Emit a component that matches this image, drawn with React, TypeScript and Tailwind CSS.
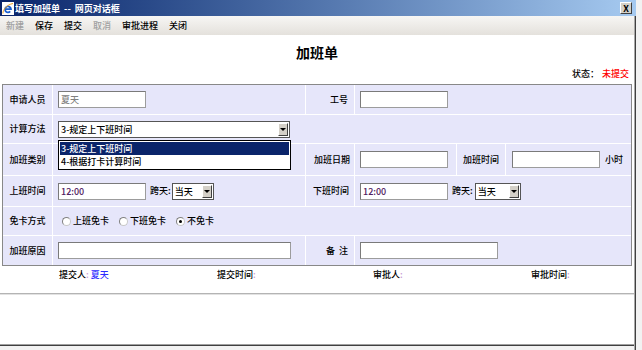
import React from "react";

function Arrow() {
  return (
    <div className="w-[10px] h-[13px] bg-[#d4d0c8] border border-t-white border-l-white border-r-[#404040] border-b-[#404040] flex items-center justify-center">
      <div className="w-0 h-0 border-l-[3px] border-r-[3px] border-t-[3px] border-l-transparent border-r-transparent border-t-black" />
    </div>
  );
}

function Input({ className = "", children }: { className?: string; children?: React.ReactNode }) {
  return (
    <div
      className={
        "h-[17px] bg-white border border-[#9c9c9c] border-t-[#7a7a7a] border-l-[#7a7a7a] flex items-center pl-[2px] text-[9px] leading-none shrink-0 " +
        className
      }
    >
      {children}
    </div>
  );
}

function Select({ className = "", children }: { className?: string; children?: React.ReactNode }) {
  return (
    <div
      className={
        "h-[17px] bg-white border border-[#555] flex items-center justify-between pl-[2px] pr-[1px] text-[9px] leading-none shrink-0 " +
        className
      }
    >
      <span>{children}</span>
      <Arrow />
    </div>
  );
}

function Radio({ checked, label }: { checked?: boolean; label: string }) {
  return (
    <div className="flex items-center">
      <span className="w-[9px] h-[9px] rounded-full border border-[#808080] border-b-[#c8c8c8] border-r-[#c8c8c8] bg-white flex items-center justify-center">
        {checked && <span className="w-[3px] h-[3px] rounded-full bg-black" />}
      </span>
      <span className="ml-[2px]">{label}</span>
    </div>
  );
}

const cell = "bg-[#e6e6fa] flex items-center";

export default function App() {
  return (
    <div className="w-[642px] h-[350px] overflow-hidden bg-[#f2f2f2] flex font-['Noto_Sans_CJK_SC',sans-serif] text-[9px] font-medium text-black">
      <div className="w-[636px] h-full flex flex-col">
        {/* title bar */}
        <div className="h-[16px] bg-linear-to-r from-[#0a246a] to-[#a6caf0] flex items-center shrink-0">
          <svg width="12" height="13" viewBox="0 0 12 13" className="ml-[2px]">
            <rect width="12" height="13" fill="#fff" />
            <path d="M3.2 7.2 H9 A3 3 0 1 0 8.2 9.4" stroke="#1a5fd0" strokeWidth="1.8" fill="none" />
            <path d="M1 11.5 C0.5 8 5 2.5 11 1.5" stroke="#f0a020" strokeWidth="1" fill="none" />
          </svg>
          <span className="ml-[1px] text-white font-bold leading-none whitespace-pre">填写加班单  --  网页对话框</span>
          <div className="flex-1" />
          <div className="w-[12px] h-[12px] mr-[4px] bg-[#d4d0c8] border border-t-white border-l-white border-r-[#404040] border-b-[#404040] flex items-center justify-center text-[9px] font-bold leading-none text-black">
            X
          </div>
        </div>
        <div className="flex flex-1">
          <div className="flex-1 flex flex-col">
            {/* toolbar */}
            <div className="h-[19px] bg-linear-to-b from-[#f7f6f4] to-[#e4e1dc] flex items-center pl-[6px] gap-[11px] leading-none shrink-0">
              <span className="text-[#a0a0a0]">新建</span>
              <span>保存</span>
              <span>提交</span>
              <span className="text-[#a0a0a0]">取消</span>
              <span>审批进程</span>
              <span>关闭</span>
            </div>
            {/* body */}
            <div className="h-[309px] bg-white flex flex-col shrink-0">
              <div className="pt-[10px] h-[24px] text-center text-[14px] leading-[14px] font-bold text-black">加班单</div>
              <div className="mt-[9px] h-[12px] leading-[12px] flex justify-end pr-[5px]">
                <span>状态：</span>
                <span className="ml-[3px] text-[#ff0000]">未提交</span>
              </div>
              <div className="mt-[4px] ml-[2px] w-[630px] h-[182px] border border-[#888] bg-white grid grid-cols-[49px_252px_48px_101px_48px_125px] grid-rows-[29px_28px_31px_30px_28px_29px] gap-px">
                {/* row 1 */}
                <div className={cell + " justify-center"}>申请人员</div>
                <div className={cell + " pl-[5px]"}>
                  <Input className="w-[88px] text-[#808080]">夏天</Input>
                </div>
                <div className={cell + " justify-end pr-[6px]"}>工号</div>
                <div className={cell + " col-span-3 pl-[5px]"}>
                  <Input className="w-[88px]" />
                </div>
                {/* row 2 */}
                <div className={cell + " justify-center"}>计算方法</div>
                <div className={cell + " col-span-5 pl-[5px]"}>
                  <div className="relative">
                    <Select className="w-[232px]">3-规定上下班时间</Select>
                    <div className="absolute z-10 left-0 top-[19px] w-[233px] h-[30px] border border-black bg-white p-[1px] leading-[13px]">
                      <div className="h-[13px] bg-[#0a246a] text-white pl-[1px]">3-规定上下班时间</div>
                      <div className="h-[13px] pl-[1px]">4-根据打卡计算时间</div>
                    </div>
                  </div>
                </div>
                {/* row 3 */}
                <div className={cell + " justify-center"}>加班类别</div>
                <div className={cell + " pl-[5px]"}>
                  <Select className="w-[232px]"> </Select>
                </div>
                <div className={cell + " justify-end pr-[4px]"}>加班日期</div>
                <div className={cell + " pl-[5px]"}>
                  <Input className="w-[88px]" />
                </div>
                <div className={cell + " justify-center"}>加班时间</div>
                <div className={cell + " pl-[6px]"}>
                  <Input className="w-[88px]" />
                  <span className="ml-[5px]">小时</span>
                </div>
                {/* row 4 */}
                <div className={cell + " justify-center"}>上班时间</div>
                <div className={cell + " pl-[5px]"}>
                  <Input className="w-[88px] text-[#502060]">12:00</Input>
                  <span className="ml-[4px]">跨天:</span>
                  <Select className="ml-[1px] w-[42px]">当天</Select>
                </div>
                <div className={cell + " justify-end pr-[5px]"}>下班时间</div>
                <div className={cell + " col-span-3 pl-[5px]"}>
                  <Input className="w-[88px] text-[#502060]">12:00</Input>
                  <span className="ml-[4px]">跨天:</span>
                  <Select className="ml-[2px] w-[46px]">当天</Select>
                </div>
                {/* row 5 */}
                <div className={cell + " justify-center"}>免卡方式</div>
                <div className={cell + " col-span-5 pl-[9px] gap-[10px]"}>
                  <Radio label="上班免卡" />
                  <Radio label="下班免卡" />
                  <Radio checked label="不免卡" />
                </div>
                {/* row 6 */}
                <div className={cell + " justify-center"}>加班原因</div>
                <div className={cell + " pl-[5px]"}>
                  <Input className="w-[233px]" />
                </div>
                <div className={cell + " justify-end pr-[6px] whitespace-pre"}>备  注</div>
                <div className={cell + " col-span-3 pl-[5px]"}>
                  <Input className="w-[138px]" />
                </div>
              </div>
              {/* footer info */}
              <div className="mt-[3px] h-[12px] leading-[12px] flex pl-[59px]">
                <div className="w-[158px] flex">
                  <span>提交人</span>
                  <span className="text-[#c89ad4]">:</span>
                  <span className="ml-[2px] text-[#2b2bff]">夏天</span>
                </div>
                <div className="w-[156px] flex">
                  <span>提交时间</span>
                  <span className="text-[#c89ad4]">:</span>
                </div>
                <div className="w-[158px] flex">
                  <span>审批人</span>
                  <span className="text-[#c89ad4]">:</span>
                </div>
                <div className="flex">
                  <span>审批时间</span>
                  <span className="text-[#c89ad4]">:</span>
                </div>
              </div>
              <div className="mt-[12px] h-[2px] border-t border-[#b4b4b4] bg-[#e2e2e2]" />
            </div>
            <div className="h-[2px] border-t border-[#a0a0a0] bg-[#404040] shrink-0" />
            <div className="flex-1 bg-[#f2f2f2]" />
          </div>
          {/* right border */}
          <div className="w-[1px] bg-[#a8a8a8]" />
          <div className="w-[1px] bg-[#404040]" />
        </div>
      </div>
      <div className="flex-1 bg-[#f2f2f2]" />
    </div>
  );
}
